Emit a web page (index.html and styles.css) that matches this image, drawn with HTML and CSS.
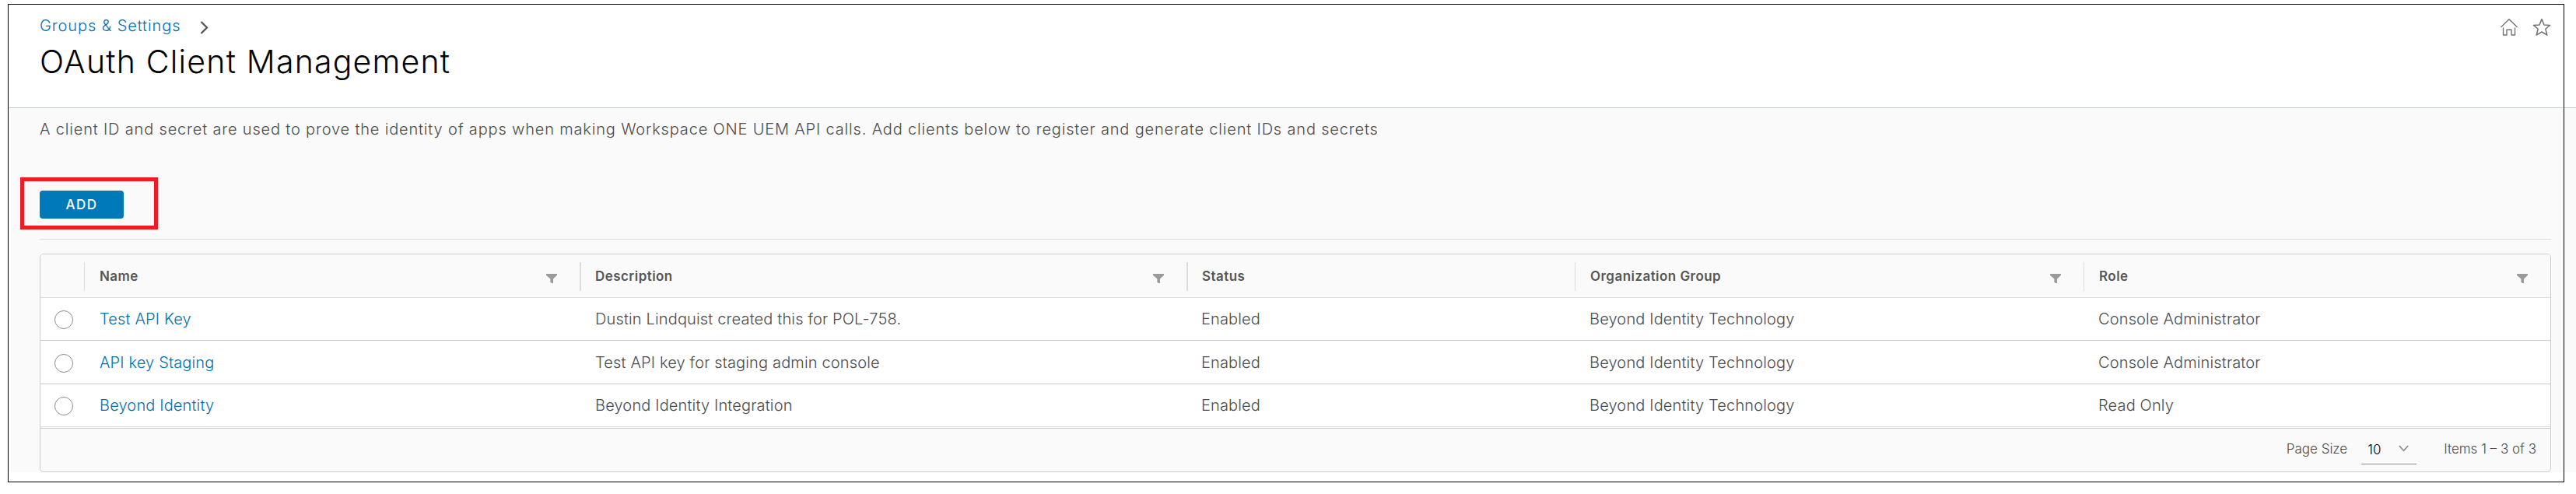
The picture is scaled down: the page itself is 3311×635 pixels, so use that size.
FILE: index.html
```html
<!DOCTYPE html>
<html lang="en">
<head>
<meta charset="utf-8">
<title>OAuth Client Management</title>
<link rel="stylesheet" href="styles.css">
</head>
<body>
<svg class="sprite" aria-hidden="true">
  <symbol id="filter" viewBox="0 0 14 12"><path d="M0 0H14V1.8L9 6.6V12H7.600L5.400 11V6.600L0 1.800Z" fill="#9a9a9a"/></symbol>
</svg>
<div class="page">
  <header class="header">
    <div class="heading">
      <nav class="crumbs">
        <a class="crumb">Groups &amp; Settings</a>
        <svg class="crumb-arrow" viewBox="0 0 11 17"><path d="M1.500 1L9 8.500L1.500 16" fill="none" stroke="#565656" stroke-width="2.300"/></svg>
      </nav>
      <h1 class="title">OAuth Client Management</h1>
    </div>
    <div class="actions">
      <svg class="action-icon" viewBox="0 0 24 24"><path d="M1.500 12L12 1.800L22.500 12M4.500 12.500V22H9V15.200H15V22H19.500V12.500" fill="none" stroke="#747474" stroke-width="1.400" stroke-linejoin="round"/></svg>
      <svg class="action-icon" viewBox="0 0 24 24"><path d="M12 1.600L14.900 8.900L22.600 9.400L16.800 14.300L18.900 22.200L12 18L5.100 22.200L7.200 14.300L1.400 9.400L9.100 8.900Z" fill="none" stroke="#747474" stroke-width="1.500" stroke-linejoin="round"/></svg>
    </div>
  </header>
  <main class="content">
    <p class="intro">A client ID and secret are used to prove the identity of apps when making Workspace ONE UEM API calls. Add clients below to register and generate client IDs and secrets</p>
    <div class="toolbar"><div class="highlight"><button class="add">ADD</button></div></div>
    <section class="grid">
      <div class="row head">
        <div class="cell"></div>
        <div class="cell">Name<svg class="filter"><use href="#filter"/></svg></div>
        <div class="cell wide">Description<svg class="filter"><use href="#filter"/></svg></div>
        <div class="cell wide">Status</div>
        <div class="cell">Organization Group<svg class="filter"><use href="#filter"/></svg></div>
        <div class="cell">Role<svg class="filter"><use href="#filter"/></svg></div>
      </div>
      <div class="row">
        <div class="cell pick"><span class="radio"></span></div>
        <div class="cell"><a class="link">Test API Key</a></div>
        <div class="cell">Dustin Lindquist created this for POL-758.</div>
        <div class="cell">Enabled</div>
        <div class="cell">Beyond Identity Technology</div>
        <div class="cell">Console Administrator</div>
      </div>
      <div class="row">
        <div class="cell pick"><span class="radio"></span></div>
        <div class="cell"><a class="link">API key Staging</a></div>
        <div class="cell">Test API key for staging admin console</div>
        <div class="cell">Enabled</div>
        <div class="cell">Beyond Identity Technology</div>
        <div class="cell">Console Administrator</div>
      </div>
      <div class="row">
        <div class="cell pick"><span class="radio"></span></div>
        <div class="cell"><a class="link">Beyond Identity</a></div>
        <div class="cell">Beyond Identity Integration</div>
        <div class="cell">Enabled</div>
        <div class="cell">Beyond Identity Technology</div>
        <div class="cell">Read Only</div>
      </div>
      <footer class="pager">
        <span>Page Size</span>
        <div class="size"><span>10</span><svg class="caret" viewBox="0 0 13 9"><path d="M.8 1L6.500 7.300L12.200 1" fill="none" stroke="#8c8c8c" stroke-width="1.700"/></svg></div>
        <span class="count">Items 1 – 3 of 3</span>
      </footer>
    </section>
  </main>
</div>
<div class="frame"></div>
</body>
</html>
```
FILE: styles.css
```css
* { box-sizing: border-box; }
body {
  margin: 0;
  background: #fff;
  color: #4c4c4c;
  font: 300 20px/24px Inter, "Liberation Sans", sans-serif;
}
.sprite { position: absolute; width: 0; height: 0; }
.page { margin-left: 10px; height: 635px; }

.header {
  display: flex;
  justify-content: space-between;
  height: 139px;
  padding: 21px 32px 0 41px;
  border-bottom: 1px solid #c1cdd4;
}
.crumbs { display: flex; gap: 25px; }
.crumb { color: #0072b0; letter-spacing: .91px; }
.crumb-arrow { width: 11px; height: 17px; margin-top: 6px; }
.title {
  margin: 10px 0 0;
  color: #000;
  font-size: 41px;
  font-weight: 300;
  line-height: 48px;
  letter-spacing: 1.2px;
}
.actions { display: flex; gap: 18px; padding-top: 2px; }
.action-icon { width: 24px; height: 24px; }

.content {
  height: 468px;
  padding: 14px 32px 0 41px;
  background: #fafafa;
}
.intro { margin: 0; height: 75px; line-height: 26px; letter-spacing: .83px; }
.toolbar {
  height: 80px;
  margin-bottom: 18px;
  border-bottom: 1px solid #ddd;
}
.highlight {
  width: 177px;
  height: 67px;
  margin-left: -25px;
  padding: 12px 20px;
  border: 5px solid #ed1c24;
}
.add {
  display: block;
  width: 108px;
  height: 36px;
  padding: 0;
  border: 0;
  border-radius: 4px;
  background: #0079b8;
  color: #fff;
  font: 500 17px/36px Inter, "Liberation Sans", sans-serif;
  letter-spacing: 1.4px;
}

.grid {
  height: 281px;
  border: 1px solid #ccc;
  border-radius: 5px;
  overflow: hidden;
}
.row {
  display: grid;
  grid-template-columns: 56px 637px 780px 499px 654px 1fr;
  height: 55px;
  background: #fff;
  border-bottom: 1px solid #ccc;
  letter-spacing: .15px;
}
.row:nth-child(3) { height: 56px; }
.row:nth-child(4) { border-color: #ddd; }
.cell { display: flex; align-items: center; padding-left: 20px; }
.cell:nth-child(n+4) { padding-left: 19px; }
.pick { padding-left: 18px; }
.radio {
  width: 24px;
  height: 24px;
  margin-top: 2px;
  border: 1px solid #8c8c8c;
  border-radius: 50%;
}
.link { color: #0072b0; }
.head {
  height: 56px;
  padding: 10px 0 8px;
  background: #fafafa;
  border-color: #ddd;
  color: #565656;
  font-size: 17px;
  font-weight: 600;
  line-height: 20px;
  letter-spacing: .45px;
}
.head .cell { padding-right: 29px; padding-bottom: 1px; }
.head .cell + .cell { border-left: 1px solid #ddd; padding-left: 19px; }
.head .cell.wide { border-left-width: 2px; padding-left: 18px; }
.filter { width: 14px; height: 12px; margin: 5px 0 0 auto; }

.pager {
  display: flex;
  justify-content: flex-end;
  align-items: center;
  height: 57px;
  margin-top: 1px;
  padding: 0 18px 4px 0;
  border-top: 1px solid #ccc;
  font-size: 17px;
}
.size {
  display: flex;
  align-items: center;
  justify-content: space-between;
  width: 71px;
  height: 38px;
  margin: 1px 35px 0 18px;
  padding: 2px 10px 0 8px;
  border-bottom: 1px solid #8c8c8c;
  color: #000;
}
.caret { width: 13px; height: 9px; margin-top: -3px; }

/* Outline drawn over the whole console window */
.frame {
  position: absolute;
  left: 10px;
  top: 5px;
  width: 3286px;
  height: 615px;
  border: 1px solid #000;
}
```
